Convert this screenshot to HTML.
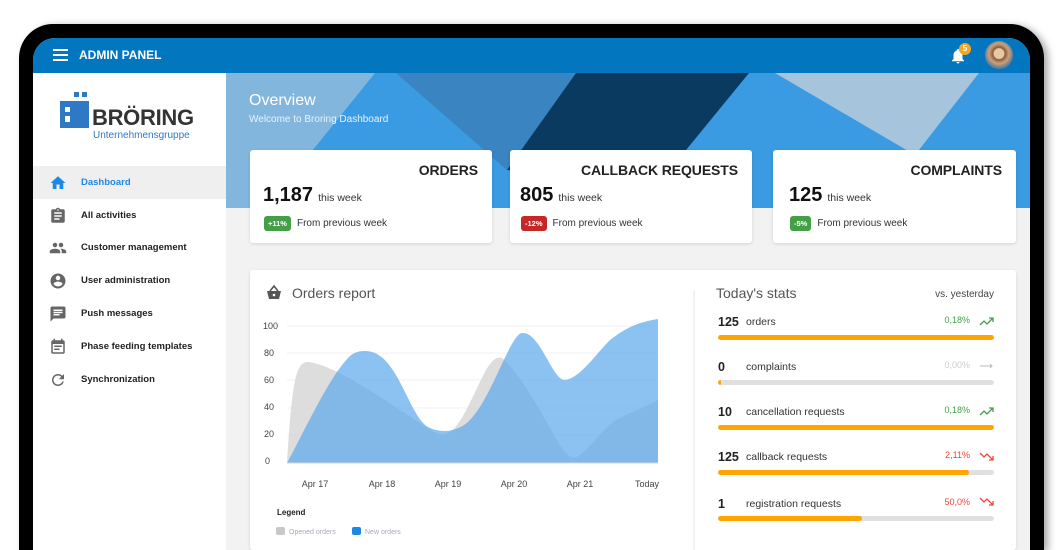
<!DOCTYPE html>
<html style="overflow:hidden"><head><meta charset="utf-8"><style>
*{margin:0;padding:0;box-sizing:border-box}
html,body{width:1058px;height:550px;overflow:hidden}
body{background:#fff;font-family:"Liberation Sans",Arial,sans-serif;position:relative}
.abs{position:absolute}
.frame{left:19px;top:24px;width:1025px;height:526px;background:#000;border-radius:34px 34px 0 0;box-shadow:4px 2px 8px rgba(0,0,0,.35)}
.screen{left:33px;top:38px;width:997px;height:512px;background:#f2f2f2;border-radius:22px 22px 0 0;overflow:hidden}
.hdr{left:0;top:0;width:997px;height:35px;background:#0277c0}
.side{left:0;top:35px;width:193px;height:477px;background:#fff}
.nav{position:absolute;left:0;width:193px;height:33px;font-size:9.5px;font-weight:bold;color:#222;line-height:33px;padding-left:48px}
.nav svg{position:absolute;left:16px;top:8px}
.card{background:#fff;border-radius:3px;box-shadow:0 1px 3px rgba(0,0,0,.12)}
.ct{position:absolute;right:14px;top:12px;font-size:14px;font-weight:bold;color:#222;letter-spacing:-.1px}
.big{position:absolute;left:13px;top:34px;font-size:20px;font-weight:bold;color:#111}
.big span{font-size:10.5px;font-weight:normal;color:#333;margin-left:5px}
.badge{display:inline-block;color:#fff;font-size:7.5px;font-weight:bold;border-radius:3px;padding:3px 4px;margin-right:6px;vertical-align:middle}
.prev{position:absolute;left:14px;top:66px;font-size:10px;color:#333}
.srow{position:absolute;left:718px;width:276px}
.srow .n{position:absolute;left:0;top:0;font-size:12.5px;font-weight:bold;color:#222}
.srow .l{position:absolute;left:28px;top:1px;font-size:10.5px;color:#333}
.srow .p{position:absolute;right:0;top:0;font-size:9px}
.bar{position:absolute;left:0;top:13px;width:276px;height:5px;background:#e0e0e0;border-radius:3px;overflow:hidden}
.bar i{display:block;height:5px;background:#ffa500;border-radius:3px}
</style></head><body>
<div class="abs frame"></div>
<div class="abs screen">
  <div class="abs hdr">
    <div class="abs" style="left:20px;top:11px;width:15px;height:2px;background:#fff;box-shadow:0 5px 0 #fff,0 10px 0 #fff"></div>
    <div class="abs" style="left:46px;top:10px;color:#fff;font-size:12px;font-weight:bold">ADMIN PANEL</div>
    <svg class="abs" style="left:916px;top:8px" width="18" height="20" viewBox="0 0 24 24"><path fill="#fff" d="M12 22c1.1 0 2-.9 2-2h-4c0 1.1.9 2 2 2zm6-6v-5c0-3.07-1.64-5.64-4.5-6.32V4c0-.83-.67-1.5-1.5-1.5s-1.5.67-1.5 1.5v.68C7.63 5.36 6 7.92 6 11v5l-2 2v1h16v-1l-2-2z"/></svg>
    <div class="abs" style="left:926px;top:5px;width:12px;height:12px;border-radius:6px;background:#f5a623;color:#fff;font-size:8px;font-weight:bold;text-align:center;line-height:12px">5</div>
    <div class="abs" style="left:952px;top:3px;width:28px;height:28px;border-radius:14px;background:radial-gradient(circle at 50% 45%,#e8c8a8 0 5px,#8a5a38 6px,#c9a27a 10px,#6b7f94 14px)"></div>
  </div>
  <div class="abs side">
    <div class="abs" style="left:41px;top:19px;width:5px;height:5px;background:#2f78c4"></div>
    <div class="abs" style="left:49px;top:19px;width:5px;height:5px;background:#2f78c4"></div>
    <div class="abs" style="left:27px;top:28px;width:29px;height:27px;background:#2f78c4"></div>
    <div class="abs" style="left:32px;top:34px;width:5px;height:5px;background:#fff"></div>
    <div class="abs" style="left:32px;top:43px;width:5px;height:6px;background:#fff"></div>
    <div class="abs" style="left:59px;top:32px;font-size:22px;font-weight:bold;color:#333;letter-spacing:-.3px">BRÖRING</div>
    <div class="abs" style="left:60px;top:57px;font-size:10px;color:#2e78c2">Unternehmensgruppe</div>
    <div class="nav" style="top:93px;background:#efefef;color:#1e88e5"><svg width="18" height="18" viewBox="0 0 24 24"><path fill="#1e88e5" d="M10 20v-6h4v6h5v-8h3L12 3 2 12h3v8z"/></svg>Dashboard</div>
    <div class="nav" style="top:126px"><svg width="18" height="18" viewBox="0 0 24 24"><path fill="#666" d="M19 3h-4.18C14.4 1.84 13.3 1 12 1s-2.4.84-2.82 2H5c-1.1 0-2 .9-2 2v14c0 1.1.9 2 2 2h14c1.1 0 2-.9 2-2V5c0-1.1-.9-2-2-2zm-7 0c.55 0 1 .45 1 1s-.45 1-1 1-1-.45-1-1 .45-1 1-1zm2 14H7v-2h7v2zm3-4H7v-2h10v2zm0-4H7V7h10v2z"/></svg>All activities</div>
    <div class="nav" style="top:158px"><svg width="18" height="18" viewBox="0 0 24 24"><path fill="#666" d="M16 11c1.66 0 2.99-1.34 2.99-3S17.66 5 16 5s-3 1.34-3 3 1.34 3 3 3zm-8 0c1.66 0 2.99-1.34 2.99-3S9.66 5 8 5 5 6.34 5 8s1.34 3 3 3zm0 2c-2.33 0-7 1.17-7 3.5V19h14v-2.5c0-2.33-4.67-3.5-7-3.5zm8 0c-.29 0-.62.02-.97.05 1.16.84 1.97 1.97 1.97 3.45V19h6v-2.5c0-2.33-4.67-3.5-7-3.5z"/></svg>Customer management</div>
    <div class="nav" style="top:191px"><svg width="18" height="18" viewBox="0 0 24 24"><path fill="#666" d="M12 2C6.48 2 2 6.48 2 12s4.48 10 10 10 10-4.48 10-10S17.52 2 12 2zm0 3c1.66 0 3 1.34 3 3s-1.34 3-3 3-3-1.34-3-3 1.34-3 3-3zm0 14.2c-2.5 0-4.71-1.28-6-3.22.03-1.99 4-3.08 6-3.08 1.99 0 5.97 1.09 6 3.08-1.29 1.94-3.5 3.22-6 3.22z"/></svg>User administration</div>
    <div class="nav" style="top:224px"><svg width="18" height="18" viewBox="0 0 24 24"><path fill="#666" d="M20 2H4c-1.1 0-2 .9-2 2v18l4-4h14c1.1 0 2-.9 2-2V4c0-1.1-.9-2-2-2zM6 9h12v2H6V9zm8 5H6v-2h8v2zm4-6H6V6h12v2z"/></svg>Push messages</div>
    <div class="nav" style="top:257px"><svg width="18" height="18" viewBox="0 0 24 24"><path fill="#666" d="M19 3h-1V1h-2v2H8V1H6v2H5c-1.11 0-2 .9-2 2v14c0 1.1.89 2 2 2h14c1.1 0 2-.9 2-2V5c0-1.1-.9-2-2-2zm0 16H5V8h14v11zM7 10h10v2H7zm0 4h7v2H7z"/></svg>Phase feeding templates</div>
    <div class="nav" style="top:290px"><svg width="18" height="18" viewBox="0 0 24 24"><path fill="#666" d="M17.65 6.35C16.2 4.9 14.21 4 12 4c-4.42 0-7.99 3.58-7.99 8s3.57 8 7.99 8c3.73 0 6.84-2.55 7.73-6h-2.08c-.82 2.33-3.04 4-5.65 4-3.31 0-6-2.69-6-6s2.69-6 6-6c1.66 0 3.14.69 4.22 1.78L13 11h7V4l-2.35 2.35z"/></svg>Synchronization</div>
  </div>
  <svg class="abs" style="left:193px;top:35px" width="804" height="135" viewBox="226 73 804 135">
    <rect x="226" y="73" width="804" height="135" fill="#3a9be2"/>
    <polygon points="226,73 375,73 266,208 226,208" fill="#83b6dd"/>
    <polygon points="396,73 576,73 507,170" fill="#3a84c2"/>
    <polygon points="576,73 749,73 655,188 507,170" fill="#0a3a60"/>
    <polygon points="775,73 979,73 915,155" fill="#a6c4dc"/>
  </svg>
  <div class="abs" style="left:216px;top:54px;color:#fff;font-size:16px">Overview</div>
  <div class="abs" style="left:216px;top:76px;color:#e8f2fb;font-size:10px">Welcome to Broring Dashboard</div>

  <div class="abs card" style="left:217px;top:112px;width:242px;height:93px">
    <div class="ct">ORDERS</div>
    <div class="big">1,187<span>this week</span></div>
    <div class="prev"><span class="badge" style="background:#43a047">+11%</span>From previous week</div>
  </div>
  <div class="abs card" style="left:477px;top:112px;width:242px;height:93px">
    <div class="ct">CALLBACK REQUESTS</div>
    <div class="big" style="left:10px">805<span>this week</span></div>
    <div class="prev" style="left:11px"><span class="badge" style="background:#c62828">-12%</span>From previous week</div>
  </div>
  <div class="abs card" style="left:740px;top:112px;width:243px;height:93px">
    <div class="ct">COMPLAINTS</div>
    <div class="big" style="left:16px">125<span>this week</span></div>
    <div class="prev" style="left:17px"><span class="badge" style="background:#43a047">-5%</span>From previous week</div>
  </div>

  <div class="abs card" style="left:217px;top:232px;width:766px;height:280px"></div>
</div>

<svg class="abs" style="left:0;top:0" width="1058" height="550">
  <g transform="translate(265,285)"><path fill="#555" d="M2 6h14l-2 8H4z"/><path d="M5 6l4-5 4 5" stroke="#555" stroke-width="1.6" fill="none"/><circle cx="9" cy="10" r="1.3" fill="#fff"/></g>
  <text x="292" y="298" font-size="14" fill="#555" font-family="Liberation Sans">Orders report</text>
  <g font-size="9" fill="#444" font-family="Liberation Sans" text-anchor="end">
    <text x="278" y="329">100</text><text x="274" y="356">80</text><text x="274" y="383">60</text><text x="274" y="410">40</text><text x="274" y="437">20</text><text x="270" y="464">0</text>
  </g>
  <g stroke="#f0f0f0" stroke-width="1"><line x1="287" y1="326" x2="658" y2="326"/><line x1="287" y1="353" x2="658" y2="353"/><line x1="287" y1="380" x2="658" y2="380"/><line x1="287" y1="408" x2="658" y2="408"/><line x1="287" y1="435" x2="658" y2="435"/></g>
  <path d="M287 463 C292 380,296 362,308 362 C330 364,370 390,400 410 C420 422,432 433,443 435 C460 432,470 400,486 370 C492 360,497 356,502 358 C520 372,545 420,560 445 C568 458,574 460,580 455 C598 440,605 425,620 418 C635 410,645 408,658 400 L658 463 Z" fill="#d5d5d5" opacity=".8"/>
  <path d="M287 463 C305 430,330 375,350 356 C356 351,364 350,372 352 C400 360,410 420,430 428 C440 432,450 432,458 428 C486 420,508 335,522 333 C540 331,552 380,565 380 C580 378,595 355,610 340 C628 326,640 322,658 319 L658 463 Z" fill="#5ba8ec" opacity=".7"/>
  <line x1="287" y1="463" x2="658" y2="463" stroke="#cfd8e0"/>
  <g font-size="9" fill="#444" font-family="Liberation Sans" text-anchor="middle">
    <text x="315" y="487">Apr 17</text><text x="382" y="487">Apr 18</text><text x="448" y="487">Apr 19</text><text x="514" y="487">Apr 20</text><text x="580" y="487">Apr 21</text><text x="647" y="487">Today</text>
  </g>
  <text x="277" y="515" font-size="8" font-weight="bold" fill="#222" font-family="Liberation Sans">Legend</text>
  <rect x="276" y="527" width="9" height="8" rx="2" fill="#c8c8c8"/><text x="289" y="534" font-size="7" fill="#aab" font-family="Liberation Sans">Opened orders</text>
  <rect x="352" y="527" width="9" height="8" rx="2" fill="#1e88e5"/><text x="365" y="534" font-size="7" fill="#aab" font-family="Liberation Sans">New orders</text>
  <line x1="694" y1="290" x2="694" y2="550" stroke="#e6e6e6"/>
  <text x="716" y="298" font-size="14" fill="#555" font-family="Liberation Sans">Today's stats</text>
  <text x="994" y="297" font-size="10" fill="#444" text-anchor="end" font-family="Liberation Sans">vs. yesterday</text>
  <path d="M980 325l4-4 3 3 6-6M989 318h4v4" stroke="#43a047" stroke-width="1.3" fill="none"/>
  <path d="M980 366h12M990 364l2 2-2 2" stroke="#bbb" stroke-width="1" fill="none"/>
  <path d="M980 415l4-4 3 3 6-6M989 408h4v4" stroke="#43a047" stroke-width="1.3" fill="none"/>
  <path d="M980 453l4 4 3-3 6 6M989 460h4v-4" stroke="#f44336" stroke-width="1.3" fill="none"/>
  <path d="M980 498l4 4 3-3 6 6M989 505h4v-4" stroke="#f44336" stroke-width="1.3" fill="none"/>
</svg>

<div class="srow" style="top:315px"><span class="n">125</span><span class="l">orders</span><span class="p" style="right:24px;color:#43a047">0,18%</span><div class="bar" style="top:20px"><i style="width:100%"></i></div></div>
<div class="srow" style="top:360px"><span class="n">0</span><span class="l">complaints</span><span class="p" style="right:24px;color:#ccc">0,00%</span><div class="bar" style="top:20px"><i style="width:1%"></i></div></div>
<div class="srow" style="top:405px"><span class="n">10</span><span class="l">cancellation requests</span><span class="p" style="right:24px;color:#43a047">0,18%</span><div class="bar" style="top:20px"><i style="width:100%"></i></div></div>
<div class="srow" style="top:450px"><span class="n">125</span><span class="l">callback requests</span><span class="p" style="right:24px;color:#f44336">2,11%</span><div class="bar" style="top:20px"><i style="width:91%"></i></div></div>
<div class="srow" style="top:497px"><span class="n">1</span><span class="l">registration requests</span><span class="p" style="right:24px;color:#f44336">50,0%</span><div class="bar" style="top:19px"><i style="width:52%"></i></div></div>
</body></html>
